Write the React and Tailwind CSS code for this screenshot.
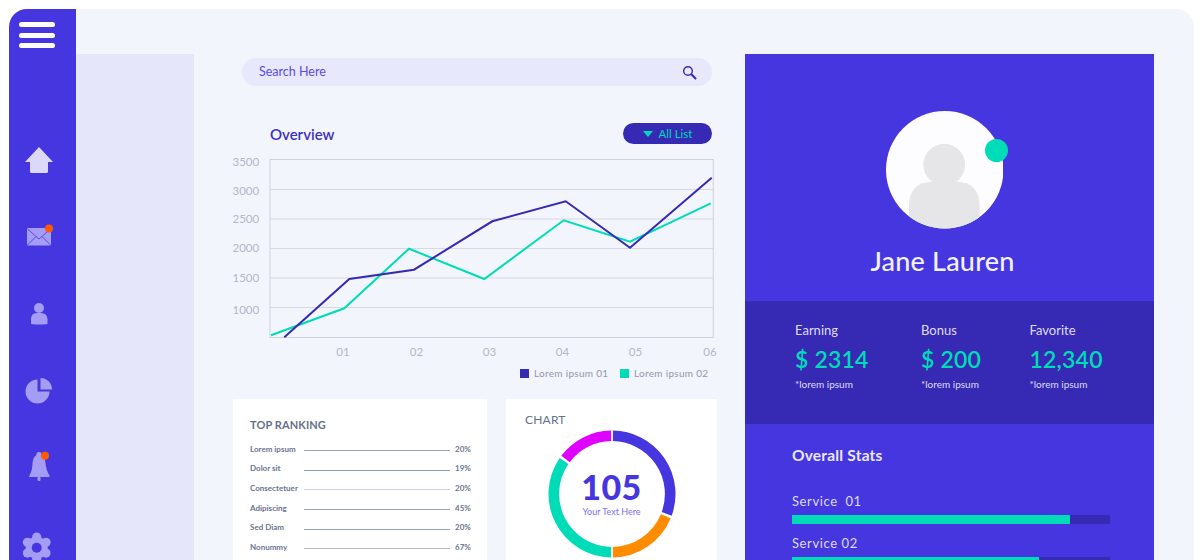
const SIDE = "#4636df";
const ICON = "#a49cf5";
const DOT = "#ff5a00";

function Arc({ from, to, color }) {
  const cx = 65, cy = 65, r = 58.2;
  const pt = (a) => {
    const t = (a * Math.PI) / 180;
    return [cx + r * Math.sin(t), cy - r * Math.cos(t)];
  };
  const [x1, y1] = pt(from);
  const [x2, y2] = pt(to);
  const large = to - from > 180 ? 1 : 0;
  return <path d={`M${x1} ${y1}A${r} ${r} 0 ${large} 1 ${x2} ${y2}`} fill="none" stroke={color} strokeWidth="10.6" />;
}

function Stat({ title, value, className }) {
  return (
    <div className={className}>
      <div className="text-[13px] leading-[16px] text-[#dedcfa]">{title}</div>
      <div className="mt-[5px] text-[23px] leading-[32px] font-semibold tracking-[0.2px] text-[#00dbb8]">{value}</div>
      <div className="mt-[2px] text-[10px] leading-[14px] text-[#dedcfa]">*lorem ipsum</div>
    </div>
  );
}

function Service({ label, fill, className }) {
  return (
    <div className={className}>
      <div className="text-[13px] leading-[16px] tracking-[0.6px] whitespace-pre text-[#dedcfa]">{label}</div>
      <div className="mt-[6px] h-[9px] w-[318px] bg-[#3629b3]">
        <div className="h-full bg-[#00dbb8]" style={{ width: fill }} />
      </div>
    </div>
  );
}

const rows = [
  ["Lorem ipsum", "20%", "bg-[#9aa3bd]"],
  ["Dolor sit", "19%", "bg-[#8e97b3]"],
  ["Consectetuer", "20%", "bg-[#ccd1de]"],
  ["Adipiscing", "45%", "bg-[#9aa3bd]"],
  ["Sed Diam", "20%", "bg-[#9aa3bd]"],
  ["Nonummy", "67%", "bg-[#b4bacd]"],
];

export default function App() {
  return (
    <div className="h-[560px] w-[1203px] overflow-hidden bg-white pt-[9px] pl-[9px] [font-family:Lato,sans-serif]">
      <div className="flex h-[551px] w-[1185px] overflow-hidden rounded-t-[18px] bg-[#f2f5fb]">
        {/* Sidebar */}
        <div className="flex w-[67px] shrink-0 flex-col bg-[#4636df] pl-[12px]">
          <div className="mt-[13px] -ml-[2px] flex w-[36px] flex-col gap-[5.5px]">
            <div className="h-[5px] rounded-full bg-white" />
            <div className="h-[5px] rounded-full bg-white" />
            <div className="h-[5px] rounded-full bg-white" />
          </div>
          <svg className="mt-[94px] shrink-0" width="36" height="36" viewBox="21 142 36 36">
            <path d="M39 147L53 162H48V171.5Q48 173 46.500 173H31.500Q30 173 30 171.500V162H25Z" fill="#dcd9f8" />
          </svg>
          <svg className="mt-[41px] shrink-0" width="36" height="36" viewBox="21 219 36 36">
            <rect x="27" y="228" width="24" height="17.500" rx="1" fill={ICON} />
            <path d="M27.500 229L39 239L50.500 229M27.500 245L36 236.500M50.500 245L42 236.500" fill="none" stroke={SIDE} strokeWidth="0.8" />
            <circle cx="49" cy="228.500" r="4" fill={DOT} />
          </svg>
          <svg className="mt-[41px] shrink-0" width="36" height="36" viewBox="21 296 36 36">
            <circle cx="39" cy="308" r="5" fill={ICON} />
            <path d="M31 324V319Q31 313 37 313H41Q47 313 47.500 319V324Q39 325 31 324Z" fill={ICON} />
          </svg>
          <svg className="mt-[41px] shrink-0" width="36" height="36" viewBox="21 373 36 36">
            <path d="M37.500 379.500V391.500H49.500A12 12 0 1 1 37.500 379.500Z" fill={ICON} />
            <path d="M40.500 378A11.500 11.500 0 0 1 52 389.500H40.500Z" fill={ICON} />
          </svg>
          <svg className="mt-[41px] shrink-0" width="36" height="36" viewBox="21 450 36 36">
            <path d="M39 452Q42 452 41.500 455Q45 457 45.500 463Q46 470 49.500 475.500Q50 477 48.500 477H30.500Q28.500 477 29.500 475.500Q32.500 470 32.500 463Q33 457 36.500 455Q36 452 39 452Z" fill={ICON} />
            <rect x="37.500" y="477" width="3" height="4" rx="1.200" fill={ICON} />
            <circle cx="45" cy="455.700" r="4" fill={DOT} />
          </svg>
          <svg className="mt-[41px] shrink-0 overflow-visible" width="36" height="36" viewBox="21 527 36 36">
            <g fill={ICON}>
              <circle cx="36.700" cy="547.700" r="11" />
              <circle cx="36.700" cy="537" r="4.600" />
              <circle cx="36.700" cy="558.400" r="4.600" />
              <circle cx="27.400" cy="542.300" r="4.600" />
              <circle cx="46" cy="542.300" r="4.600" />
              <circle cx="27.400" cy="553.100" r="4.600" />
              <circle cx="46" cy="553.100" r="4.600" />
            </g>
            <circle cx="36.700" cy="547.700" r="5" fill={SIDE} />
          </svg>
        </div>

        {/* Lilac strip */}
        <div className="mt-[45px] w-[118px] shrink-0 bg-[#e5e6fa]" />

        {/* Main column */}
        <div className="w-[551px] shrink-0 pt-[49px]">
          <div className="ml-[48px] flex h-[28px] w-[470px] items-center justify-between rounded-full bg-[#e7e8fc] pr-[15px] pl-[17px]">
            <span className="text-[12.500px] text-[#5a4de0]">Search Here</span>
            <svg width="15" height="15" viewBox="0 0 15 15">
              <circle cx="6" cy="6" r="4.300" fill="none" stroke="#3629b3" strokeWidth="1.400" />
              <path d="M9.300 9.300L13.500 13.500" stroke="#3629b3" strokeWidth="2" strokeLinecap="round" />
            </svg>
          </div>

          <div className="mt-[37px] ml-[76px] flex h-[21px] w-[442px] items-start justify-between">
            <span className="mt-[2px] text-[15px] leading-[18px] font-semibold text-[#3d2fc4]">Overview</span>
            <div className="flex h-[21px] w-[89px] items-center justify-center gap-[6px] rounded-full bg-[#3629b3]">
              <svg width="10" height="6" viewBox="0 0 10 6"><path d="M0 0H10L5 6Z" fill="#00dbb8" /></svg>
              <span className="text-[11.500px] text-[#00dbb8]">All List</span>
            </div>
          </div>

          <svg className="mt-[6px] ml-[34px] block" width="500" height="210" viewBox="228 150 500 210">
            <g stroke="#d5d9e2" strokeWidth="1" fill="none">
              <rect x="270" y="159.500" width="443.300" height="178" stroke="#cdd1da" />
              <path d="M270 189.500H713M270 219H713M270 248.500H713M270 278H713M270 307.500H713" />
            </g>
            <polyline points="271,335.300 344.300,308.300 409,248.700 484.300,279 563.700,220.300 630,241.700 710.700,203.300" fill="none" stroke="#00dbb8" strokeWidth="2" />
            <polyline points="284.300,337.300 349.300,279 414,269.700 492.300,221.300 565.700,201.300 630,247.700 711.700,177.700" fill="none" stroke="#3629b3" strokeWidth="2" />
            <g fill="#b3b7c6" fontSize="11.500" fontFamily="Lato, sans-serif">
              <text x="232.500" y="165.500">3500</text>
              <text x="232.500" y="195">3000</text>
              <text x="232.500" y="223">2500</text>
              <text x="232.500" y="252">2000</text>
              <text x="232.500" y="281.500">1500</text>
              <text x="232.500" y="313.500">1000</text>
              <text x="343" y="356" textAnchor="middle">01</text>
              <text x="416.500" y="356" textAnchor="middle">02</text>
              <text x="489.500" y="356" textAnchor="middle">03</text>
              <text x="562.500" y="356" textAnchor="middle">04</text>
              <text x="635.500" y="356" textAnchor="middle">05</text>
              <text x="710" y="356" textAnchor="middle">06</text>
            </g>
          </svg>

          <div className="mt-[6px] ml-[326px] flex h-[14px] items-center text-[10px] tracking-[0.3px] text-[#9297a8]">
            <span className="h-[9px] w-[9px] bg-[#3629b3]" />
            <span className="ml-[5px] w-[86px]">Lorem ipsum 01</span>
            <span className="h-[9px] w-[9px] bg-[#00dbb8]" />
            <span className="ml-[5px]">Lorem ipsum 02</span>
          </div>

          <div className="mt-[19px] ml-[38.500px] flex gap-[19px]">
            <div className="h-[170px] w-[254.500px] bg-white pt-[19px] pl-[17.500px]">
              <div className="text-[11px] leading-[14px] font-bold tracking-[0.1px] text-[#667089]">TOP RANKING</div>
              <div className="mt-[7px]">
                {rows.map(([label, pct, line]) => (
                  <div key={label} className="flex h-[19.600px] items-center text-[8px] font-bold text-[#6b7390]">
                    <span className="w-[54px] shrink-0">{label}</span>
                    <span className={`mt-[4px] h-px w-[146px] shrink-0 ${line}`} />
                    <span className="ml-[5px]">{pct}</span>
                  </div>
                ))}
              </div>
            </div>
            <div className="h-[170px] w-[211px] bg-white pt-[14px] pl-[19px]">
              <div className="text-[12px] leading-[14px] tracking-[0.2px] text-[#667089]">CHART</div>
              <div className="relative mt-[2px] ml-[21.500px] h-[130px] w-[130px]">
                <svg width="130" height="130" viewBox="0 0 130 130">
                  <Arc from={0.9} to={110} color="#4636df" />
                  <Arc from={112.500} to={179.100} color="#ff8c00" />
                  <Arc from={180.900} to={304.500} color="#00dbb8" />
                  <Arc from={307} to={359.100} color="#e000ff" />
                </svg>
                <div className="absolute inset-0 flex flex-col items-center">
                  <div className="mt-[38px] text-[34px] leading-[40px] font-black tracking-[0.5px] text-[#4636df]">105</div>
                  <div className="-mt-[1px] text-[9px] leading-[12px] text-[#7c70f5]">Your Text Here</div>
                </div>
              </div>
            </div>
          </div>
        </div>

        {/* Profile panel */}
        <div className="mt-[45px] h-[506px] w-[409px] shrink-0 bg-[#4636df]">
          <div className="h-[247px] pt-[57px]">
            <div className="relative ml-[140.700px] h-[117.500px] w-[117.500px]">
              <svg className="block" width="117.500" height="117.500" viewBox="0 0 118 118">
                <defs>
                  <clipPath id="avatar"><circle cx="59" cy="59" r="59" /></clipPath>
                </defs>
                <circle cx="59" cy="59" r="59" fill="#fdfdff" />
                <g clipPath="url(#avatar)" fill="#e6e6e9">
                  <circle cx="58.500" cy="54" r="21" />
                  <path d="M23 120V96Q23 71 48 71H70Q94 71 94 96V120Z" />
                </g>
              </svg>
              <div className="absolute top-[28px] left-[99px] h-[23px] w-[23px] rounded-full bg-[#00dbb8]" />
            </div>
            <div className="mt-[15.500px] w-[395px] text-center text-[27px] leading-[34px] font-medium tracking-[0.2px] text-[#f2f1fe]">Jane Lauren</div>
          </div>
          <div className="flex h-[123px] bg-[#3629b3] pt-[21px] pl-[50px]">
            <Stat className="w-[126px]" title="Earning" value="$ 2314" />
            <Stat className="w-[108.500px]" title="Bonus" value="$ 200" />
            <Stat title="Favorite" value="12,340" />
          </div>
          <div className="pt-[21px] pl-[47px]">
            <div className="text-[15.500px] leading-[20px] font-bold tracking-[0.2px] text-[#e9e8fd]">Overall Stats</div>
            <Service className="mt-[28px]" label="Service  01" fill="278px" />
            <Service className="mt-[11px]" label="Service 02" fill="247px" />
          </div>
        </div>
      </div>
    </div>
  );
}
